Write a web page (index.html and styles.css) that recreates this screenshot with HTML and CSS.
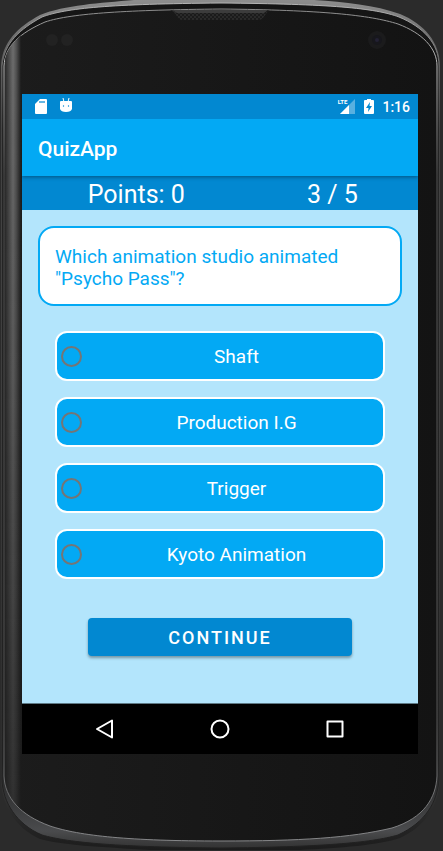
FILE: index.html
```html
<!DOCTYPE html>
<html lang="en">
<head>
<meta charset="utf-8">
<meta name="viewport" content="width=device-width, initial-scale=1">
<title>QuizApp</title>
<link rel="stylesheet" href="styles.css">
</head>
<body>
<div class="phone">
  <svg class="phone-shell" viewBox="0 0 443 851" preserveAspectRatio="none" aria-hidden="true">
    <defs>
      <linearGradient id="rim" x1="0" y1="0" x2="0" y2="1">
        <stop offset="0" stop-color="#8d8d8d"/>
        <stop offset=".08" stop-color="#555"/>
        <stop offset=".5" stop-color="#505050"/>
        <stop offset=".93" stop-color="#333"/>
        <stop offset="1" stop-color="#1c1c1c"/>
      </linearGradient>
      <linearGradient id="highlight" x1="0" y1="0" x2="0" y2="1">
        <stop offset="0" stop-color="#b5b5b5"/>
        <stop offset=".06" stop-color="#777"/>
        <stop offset=".15" stop-color="#333"/>
        <stop offset="1" stop-color="#202020"/>
      </linearGradient>
      <linearGradient id="band" x1="0" y1="0" x2="0" y2="1">
        <stop offset="0" stop-color="#151515"/>
        <stop offset=".9" stop-color="#202020"/>
        <stop offset=".98" stop-color="#4a4b4d"/>
        <stop offset="1" stop-color="#333"/>
      </linearGradient>
      <linearGradient id="line" x1="0" y1="0" x2="0" y2="1">
        <stop offset="0" stop-color="#8a8a8a"/>
        <stop offset=".07" stop-color="#bbb"/>
        <stop offset=".2" stop-color="#555"/>
        <stop offset=".85" stop-color="#555"/>
        <stop offset="1" stop-color="#858688"/>
      </linearGradient>
      <linearGradient id="glass" x1="0" y1="0" x2="1" y2="0">
        <stop offset="0" stop-color="#1c1c1c"/>
        <stop offset="1" stop-color="#131313"/>
      </linearGradient>
      <linearGradient id="side" x1="0" y1="0" x2="1" y2="0">
        <stop offset="0" stop-color="#2b2b2b"/>
        <stop offset=".5" stop-color="#707070"/>
        <stop offset=".7" stop-color="#555"/>
        <stop offset="1" stop-color="#1c1c1c"/>
      </linearGradient>
      <linearGradient id="fade" x1="0" y1="0" x2="0" y2="1">
        <stop offset="0" stop-color="#fff"/>
        <stop offset=".45" stop-color="#bbb"/>
        <stop offset="1" stop-color="#333"/>
      </linearGradient>
      <mask id="side-mask"><path d="M0 0H30V851H0Z" fill="url(#fade)"/></mask>
      <clipPath id="glass-clip"><path d="M4 66C5 46 20 33 45 22C72 13 130 10 221 9C320 10 370 15 398 24C422 33 437 48 437 66V776C436 798 424 818 392 828C350 838 300 841 221 841C130 841 80 836 50 826C20 815 5 798 4 776Z"/></clipPath>
      <pattern id="mesh" width="4" height="4" patternUnits="userSpaceOnUse">
        <path d="M0 0H4V4H0Z" fill="#2a2a2a"/><circle cx="1" cy="1" r="1" fill="#151515"/><circle cx="3" cy="3" r="1" fill="#151515"/>
      </pattern>
    </defs>
    <path d="M1 66C2 42 18 27 40 15C65 5 100 3 134 0H314C345 2 375 5 400 14C424 24 440 42 440 66V780C438 804 428 825 400 838C380 845 340 848 300 850H150C100 847 60 845 40 839C15 828 2 805 1 780Z" fill="url(#rim)"/>
    <path d="M2 66C4 43 20 29 42 17C66 8 110 4 221 3C330 4 375 8 399 17C423 27 439 43 439 66V780C437 802 426 822 398 835C370 843 320 847 221 848C120 847 70 843 42 835C16 824 3 802 2 780Z" fill="url(#band)" stroke="url(#highlight)"/>
    <path d="M4 66C5 46 20 33 45 22C72 13 130 10 221 9C320 10 370 15 398 24C422 33 437 48 437 66V776C436 798 424 818 392 828C350 838 300 841 221 841C130 841 80 836 50 826C20 815 5 798 4 776Z" fill="url(#glass)" stroke="url(#line)"/>
    <g clip-path="url(#glass-clip)"><path d="M5 30H21V815H5Z" fill="url(#side)" mask="url(#side-mask)"/></g>
    <path d="M170 10H270C265 12 265 20 258 20H183C176 20 177 12 170 10Z" fill="url(#mesh)"/>
    <path d="M172 10H268L264 13H177Z" fill="#3c3c3c"/>
    <circle cx="52" cy="40" r="6" fill="#222"/><circle cx="67" cy="40" r="6" fill="#222"/>
    <circle cx="377" cy="40" r="9" fill="#1b1b1c"/><circle cx="377" cy="40" r="5" fill="#17171c"/><circle cx="377" cy="40" r="2" fill="#232133"/>
  </svg>

  <div class="screen">
    <div class="status-bar">
      <svg class="sd-icon" viewBox="0 0 13 15" aria-hidden="true">
        <path d="M5 0H11Q12 0 12 1V14Q12 15 11 15H1Q0 15 0 14V5Z" fill="#fff"/>
        <path d="M5 2V4M7 2V4M9 2V4" stroke="#0288d1" stroke-width="1.2"/>
      </svg>
      <svg class="bot-icon" viewBox="0 0 12 14" aria-hidden="true">
        <path d="M3 0L4 4M9 0L8 4" stroke="#fff"/>
        <path d="M0 4Q0 3 1 3H11Q12 3 12 4V11Q11 14 6 14Q1 14 0 11Z" fill="#fff"/>
        <circle cx="3.500" cy="8" r=".7" fill="#0288d1"/><circle cx="8.500" cy="8" r=".7" fill="#0288d1"/>
      </svg>
      <span class="status-right">
        <span class="signal">
          <svg class="signal-icon" viewBox="0 0 15 15" aria-hidden="true">
            <path d="M15 0V15H0Z" fill="#58b0e0"/><path d="M9 6V15H0Z" fill="#fff"/>
          </svg>
          <span class="network">LTE</span>
        </span>
        <svg class="battery-icon" viewBox="0 0 10 15" aria-hidden="true">
          <path d="M3 0H7V1H9Q10 1 10 2V14Q10 15 9 15H1Q0 15 0 14V2Q0 1 1 1H3Z" fill="#fff"/>
          <path d="M6 3L2 9H4.500L4 13L8 7H5.500Z" fill="#0288d1"/>
        </svg>
        <time class="clock">1:16</time>
      </span>
    </div>

    <header class="app-bar"><h1 class="app-title">QuizApp</h1></header>

    <div class="score-bar"><span>Points: 0</span><span>3 / 5</span></div>

    <form class="quiz">
      <fieldset class="question-group">
        <legend class="question">Which animation studio animated "Psycho Pass"?</legend>
        <div class="answers">
          <label class="answer"><input type="radio" name="studio"><span>Shaft</span></label>
          <label class="answer"><input type="radio" name="studio"><span>Production I.G</span></label>
          <label class="answer"><input type="radio" name="studio"><span>Trigger</span></label>
          <label class="answer"><input type="radio" name="studio"><span>Kyoto Animation</span></label>
        </div>
      </fieldset>
      <button class="continue" type="button">CONTINUE</button>
    </form>

    <nav class="nav-bar">
      <button type="button" aria-label="Back"><svg viewBox="0 0 20 20"><path d="M17 1.500V18.500L2 10Z"/></svg></button>
      <button type="button" aria-label="Home"><svg viewBox="0 0 20 20"><circle cx="10" cy="10" r="8.500"/></svg></button>
      <button type="button" aria-label="Overview"><svg viewBox="0 0 20 20"><path d="M2.500 2.500H17.500V17.500H2.500Z"/></svg></button>
    </nav>
  </div>
</div>
</body>
</html>
```
FILE: styles.css
```css
* {
  box-sizing: border-box;
}

body {
  margin: 0;
  background: #2b2b2b;
  font-family: Roboto, "Liberation Sans", sans-serif;
}

.phone {
  position: relative;
  display: flex;
  min-height: 100vh;
  padding: 94px 25px 97px 22px;
}

.phone-shell {
  position: absolute;
  inset: 0;
  width: 100%;
  height: 100%;
}

.screen {
  position: relative;
  display: flex;
  flex: 1;
  flex-direction: column;
  min-width: 0;
  background: #b3e5fc;
  color: #fff;
}

.status-bar {
  display: flex;
  align-items: center;
  height: 25px;
  padding: 0 8px 0 13px;
  background: #0288d1;
}

.sd-icon {
  width: 13px;
  height: 15px;
}

.bot-icon {
  width: 12px;
  height: 14px;
  margin: 0 0 3px 12px;
}

.status-right {
  display: flex;
  align-items: center;
  margin-left: auto;
}

.signal {
  position: relative;
  display: flex;
  margin-right: 9px;
}

.signal-icon {
  width: 15px;
  height: 15px;
}

.network {
  position: absolute;
  top: -1px;
  right: 8px;
  font-size: 6px;
  font-weight: 700;
  line-height: 8px;
}

.battery-icon {
  width: 10px;
  height: 15px;
  margin-right: 8px;
}

.clock {
  font-size: 14px;
  font-weight: 500;
  line-height: 24px;
}

.app-bar {
  position: relative;
  display: flex;
  align-items: center;
  height: 57px;
  padding: 2px 16px 0;
  background: #03a9f4;
  box-shadow: 0 1px 4px rgba(0, 0, 0, 0.4);
  clip-path: inset(0 0 -8px);
}

.app-title {
  margin: 0;
  font-size: 21px;
  font-weight: 500;
  line-height: 24px;
}

.score-bar {
  display: grid;
  grid-template-columns: 7fr 5fr;
  height: 34px;
  padding: 3px 4px 0 0;
  background: #0288d1;
  font-size: 25px;
  line-height: 32px;
  text-align: center;
}

.quiz {
  display: flex;
  flex: 1;
  flex-direction: column;
  padding: 16px;
  border-bottom: 1px solid #5f7a86;
}

.question-group {
  min-width: 0;
  margin: 0;
  padding: 0;
  border: 0;
}

.question {
  width: 100%;
  padding: 18px 15px 14px;
  border: 2px solid #03a9f4;
  border-radius: 16px;
  background: #fff;
  color: #03a9f4;
  font-size: 19px;
  line-height: 22px;
}

.answers {
  display: grid;
  gap: 16px;
  padding: 25px 17px 0;
}

.answer {
  display: flex;
  align-items: center;
  height: 50px;
  padding: 0 4px;
  border: 2px solid #fff;
  border-radius: 12px;
  background: #03a9f4;
  font-size: 19px;
  line-height: 24px;
}

.answer input {
  width: 21px;
  height: 21px;
  margin: 0;
  border: 2px solid #757575;
  border-radius: 50%;
  appearance: none;
}

.answer input:checked {
  background: #757575;
  box-shadow: inset 0 0 0 3px #03a9f4;
}

.answer span {
  flex: 1;
  padding: 2px 0 0 12px;
  text-align: center;
}

.continue {
  align-self: center;
  width: calc(100% - 100px);
  height: 38px;
  margin-top: 39px;
  border: 0;
  border-radius: 4px;
  background: #0288d1;
  box-shadow: 0 2px 3px rgba(0, 0, 0, 0.35);
  color: #fff;
  font-family: inherit;
  font-size: 18px;
  font-weight: 500;
  letter-spacing: 2px;
}

.nav-bar {
  display: flex;
  justify-content: center;
  height: 50px;
  background: #000;
}

.nav-bar button {
  display: grid;
  place-items: center;
  width: 115px;
  padding: 0;
  border: 0;
  background: none;
}

.nav-bar svg {
  width: 20px;
  height: 20px;
  fill: none;
  stroke: #fff;
  stroke-linejoin: round;
  stroke-width: 2;
}
```
